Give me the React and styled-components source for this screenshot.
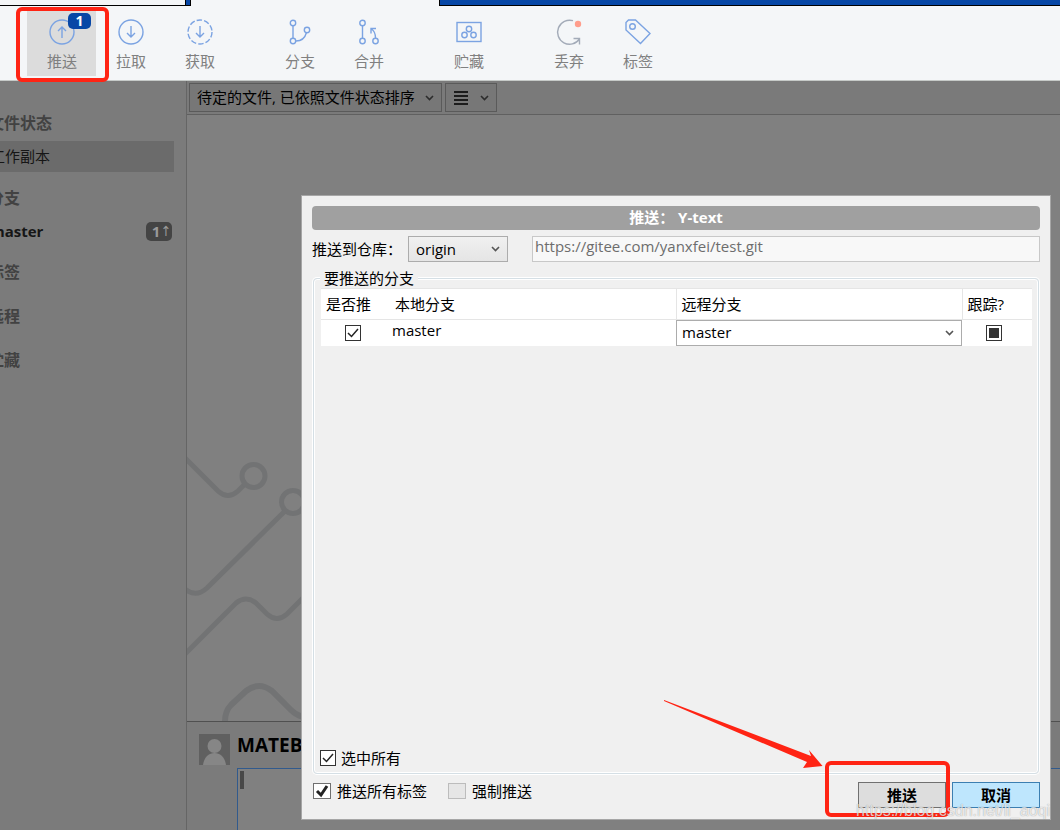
import { useEffect, useRef } from "react";
import styled, { createGlobalStyle } from "styled-components";

const GlobalStyle = createGlobalStyle`
	* {
		box-sizing: border-box;
	}

	body {
		margin: 0;
		background: #808080;
		font-family: "Open Sans", "Noto Sans CJK SC", sans-serif;
		font-size: 15px;
		line-height: 20px;
		color: #000;
	}

	button, input, select, textarea {
		font: inherit;
		color: inherit;
		margin: 0;
	}
`;

const PageElm = styled.div`
	position: relative;
	display: flex;
	flex-direction: column;
	min-height: 100vh;
	overflow: hidden;
`;

/* window tabs */

const TabStripElm = styled.div`
	display: flex;
	height: 6px;
	background: #0747a6;
	border-bottom: 1px solid #000;
`;

const TabElm = styled.div`
	width: ${(props) => props.$width};
	height: ${(props) => (props.$active ? "6px" : "5px")};
	background: #f4f6f8;
	border-right: 1px solid #000;
	margin-right: 4px;
	border-left: ${(props) => (props.$active ? "1px solid #000" : "0")};
`;

/* toolbar */

const ToolbarElm = styled.header`
	display: flex;
	gap: 31px;
	height: 75px;
	padding: 4px 27px;
	background: #f4f6f8;
	border-bottom: 1px solid #c6cac8;
`;

const ToolGroupElm = styled.div`
	display: flex;
	position: relative;
`;

const ToolButtonElm = styled.button`
	position: relative;
	display: flex;
	flex-direction: column;
	align-items: center;
	gap: 5px;
	width: 69px;
	height: 66px;
	padding: 8px 0 0 1px;
	border: 0;
	color: #808080;
	background: ${(props) => (props.$active ? "#dcdcdc" : "transparent")};

	svg {
		display: block;
		fill: none;
		stroke: #7ba3e2;
		stroke-width: 1.4;
	}
`;

const CountElm = styled.span`
	position: absolute;
	top: 3px;
	right: 5px;
	width: 23px;
	height: 16px;
	border-radius: 5px;
	background: #0747a6;
	color: #fff;
	font-size: 14px;
	font-weight: 700;
	line-height: 15px;
	text-align: center;
`;

/* body */

const BodyElm = styled.div`
	display: flex;
	flex-grow: 1;
`;

const SidebarElm = styled.nav`
	width: 187px;
	flex-shrink: 0;
	padding-top: 30px;
	background: #7b7b7b;
	border-right: 1px solid #656565;
	overflow: hidden;
`;

const SideTitleElm = styled.h2`
	margin: 0 0 ${(props) => props.$gap || "20px"} -12px;
	font-size: 16px;
	font-weight: 700;
	line-height: 24px;
	color: #424242;
`;

const SideRowElm = styled.a`
	display: flex;
	align-items: center;
	justify-content: space-between;
	height: ${(props) => (props.$selected ? "31px" : "22px")};
	margin: 0 ${(props) => (props.$selected ? "12px 14px" : "14px 18px")} 0;
	padding-bottom: ${(props) => (props.$selected ? "2px" : "0")};
	background: ${(props) => (props.$selected ? "#6b6b6b" : "transparent")};
	color: #161616;
	font-weight: ${(props) => (props.$selected ? 400 : 700)};
	text-decoration: none;

	span:first-child {
		margin-left: -10px;
	}
`;

const AheadElm = styled.span`
	display: flex;
	align-items: center;
	justify-content: flex-end;
	width: 26px;
	height: 19px;
	padding-right: 1px;
	border-radius: 5px;
	background: #444;
	color: #999;
	line-height: 19px;

	i {
		font-family: "DejaVu Sans Condensed", "DejaVu Sans", sans-serif;
		font-size: 14px;
		font-style: normal;
		font-weight: 400;
	}
`;

const MainElm = styled.main`
	display: flex;
	flex-direction: column;
	flex-grow: 1;
	min-width: 0;
`;

const FilterBarElm = styled.div`
	display: flex;
	gap: 3px;
	height: 34px;
	padding: 2px;
	background: #7a7a7a;
	border-bottom: 1px solid #606060;
`;

const SelectBoxElm = styled.span`
	position: relative;
	display: flex;
	align-items: center;
	width: ${(props) => props.$width || "100%"};

	> svg {
		position: absolute;
		right: 8px;
		pointer-events: none;
	}
`;

const ChevronElm = styled.svg`
	&& {
		fill: none;
		stroke: ${(props) => (props.$dim ? "#2c2c2c" : "#555")};
		stroke-width: 1.6;
	}
`;

const SelectElm = styled.select`
	appearance: none;
	width: 100%;
	height: 26px;
	padding: 0 7px;
	border: 1px solid #acacac;
	border-radius: 0;
	background: linear-gradient(#f0f0f0, #e5e5e5);
`;

const FilterSelectElm = styled(SelectElm)`
	height: 29px;
	padding-bottom: 1px;
	border-color: #5a5a5a;
	background: #777;
`;

const CellSelectElm = styled(SelectElm)`
	padding: 0 5px 2px;
	background: #fff;
`;

const ListButtonElm = styled.button`
	display: flex;
	align-items: center;
	justify-content: space-between;
	width: 52px;
	height: 29px;
	padding: 0 7px 0 8px;
	border: 1px solid #5a5a5a;
	background: #777;
`;

const LinesElm = styled.svg`
	stroke: #1c1c1c;
	stroke-width: 2;
`;

const CanvasElm = styled.div`
	display: flex;
	align-items: flex-end;
	flex-grow: 1;
	background: #808080;

	svg {
		display: block;
		fill: none;
		stroke: #727374;
		stroke-width: 5;
	}
`;

const CommitElm = styled.section`
	display: flex;
	gap: 7px;
	height: 109px;
	padding: 12px 0 0 12px;
	background: #7b7b7b;
	border-top: 1px solid #505050;
`;

const CommitFormElm = styled.div`
	position: relative;
	display: flex;
	flex-direction: column;
	flex-grow: 1;
	gap: 12px;
`;

const AuthorElm = styled.strong`
	font-size: 19px;
	line-height: 22px;
`;

const MessageElm = styled.textarea`
	flex-grow: 1;
	width: 100%;
	border: 1px solid #315a8d;
	border-width: 1px 0 0 1px;
	background: #808080;
	resize: none;
	outline: none;
`;

const CaretElm = styled.span`
	position: absolute;
	left: 3px;
	top: 37px;
	width: 4px;
	height: 18px;
	background: #484848;
`;

/* push dialog */

const DialogElm = styled.form`
	position: absolute;
	top: 195px;
	right: 9px;
	bottom: 10px;
	left: 301px;
	display: flex;
	flex-direction: column;
	padding: 10px 10px 11px;
	background: #f0f0f0;
	border: 1px solid #a6a6a6;
`;

const DialogTitleElm = styled.h1`
	margin: 0 0 6px;
	height: 24px;
	border-radius: 4px;
	background: #a0a0a0;
	color: #fff;
	font-size: 15px;
	line-height: 23px;
	text-align: center;
`;

const RepoRowElm = styled.div`
	display: flex;
	align-items: center;
	height: 26px;

	label {
		width: 96px;
		flex-shrink: 0;
	}
`;

const UrlElm = styled.input`
	flex-grow: 1;
	height: 26px;
	margin-left: 24px;
	padding: 0 2px 6px;
	border: 1px solid #c8c8c8;
	background: #f8f8f8;
	color: #6d6d6d;
`;

const GroupElm = styled.fieldset`
	display: flex;
	flex-direction: column;
	flex-grow: 1;
	min-width: 0;
	margin: 7px 1px 0;
	padding: 0 6px 5px;
	border: 1px solid #d5dfe5;
	border-radius: 4px;
	box-shadow: 0 0 0 1px #fff, inset 0 0 0 1px #fff;

	legend {
		padding: 0 4px;
		background: #f0f0f0;
		line-height: 18px;
	}
`;

const TableElm = styled.table`
	width: calc(100% - 1px);
	margin: 1px 0 0 1px;
	table-layout: fixed;
	border-collapse: collapse;
	background: #fff;

	th {
		height: 31px;
		padding: 0 5px;
		border-top: 1px solid #e5e5e5;
		border-bottom: 1px solid #e5e5e5;
		font-weight: 400;
		text-align: left;
		white-space: nowrap;
	}

	th:nth-child(n + 3) {
		border-left: 1px solid #e5e5e5;
	}

	td {
		height: 26px;
		padding: 0;
	}
`;

const CheckCellElm = styled.td`
	&& {
		padding-right: 6px;
	}
`;

const LocalNameElm = styled.td`
	&& {
		padding: 0 2px 6px;
		line-height: 18px;
	}
`;

const SpacerElm = styled.div`
	flex-grow: 1;
`;

const CheckLabelElm = styled.label`
	display: flex;
	align-items: center;
	gap: ${(props) => props.$gap || "5px"};
	justify-content: ${(props) => (props.$center ? "center" : "flex-start")};
	color: #000;
`;

const CheckBoxElm = styled.span`
	display: grid;
	place-items: center;

	> * {
		grid-area: 1 / 1;
	}

	svg {
		pointer-events: none;
		fill: none;
		stroke: #222;
		stroke-width: ${(props) => (props.$bold ? 3 : 1.5)};
	}
`;

const CheckInputElm = styled.input`
	appearance: none;
	width: ${(props) => (props.$wide ? "18px" : "16px")};
	height: 16px;
	border: 1px solid ${(props) => (props.disabled ? "#bcbcbc" : props.$wide ? "#707070" : "#333")};
	background: ${(props) => (props.disabled ? "#e6e6e6" : "#fff")};
`;

const MixedElm = styled.i`
	width: 10px;
	height: 10px;
	background: #333;
	pointer-events: none;
`;

const FooterElm = styled.footer`
	display: flex;
	align-items: center;
	gap: 6px;
	height: 26px;
	margin-top: 8px;
`;

const OptionsElm = styled.div`
	display: flex;
	flex-grow: 1;
	gap: 21px;
	padding: 0 0 9px 1px;
`;

const DialogButtonElm = styled.button`
	width: 88px;
	height: 26px;
	padding: 0;
	border: 1px solid ${(props) => (props.$focus ? "#3c7fb1" : "#707070")};
	background: ${(props) => (props.$focus ? "#bee6fd" : "#ddd")};
	font-weight: 700;
`;

/* marks over the window */

const FrameElm = styled.div`
	position: absolute;
	border: 4px solid #ff2414;
	border-radius: 6px;
	pointer-events: none;
`;

const PushFrameElm = styled(FrameElm)`
	top: -3px;
	left: -11px;
	width: 93px;
	height: 75px;
	z-index: 1;
`;

const ConfirmFrameElm = styled(FrameElm)`
	right: 100px;
	bottom: 2px;
	width: 125px;
	height: 56px;
`;

const ArrowElm = styled.svg`
	position: absolute;
	right: 227px;
	bottom: 50px;
	fill: #ff2414;
	pointer-events: none;
`;

const WatermarkElm = styled.span`
	position: absolute;
	right: 0;
	bottom: -1px;
	color: rgba(255, 255, 255, 0.75);
	font-family: "Liberation Sans", sans-serif;
	font-size: 16px;
	line-height: 18px;
	text-shadow: 0 0 1px rgba(0, 0, 0, 0.4);
	pointer-events: none;
`;

const Icon = ({ children }) => (
	<svg width="28" height="28" viewBox="0 0 28 28" aria-hidden="true">{children}</svg>
);

const icons = {
	push: <Icon><circle cx="14" cy="14" r="12" /><path d="M14 20V9M10 13l4-4 4 4" /></Icon>,
	pull: <Icon><circle cx="14" cy="14" r="12" /><path d="M14 8v11M10 15l4 4 4-4" /></Icon>,
	fetch: <Icon><circle cx="14" cy="14" r="12" strokeDasharray="5.5 2.04" /><path d="M14 8v11M10 15l4 4 4-4" /></Icon>,
	branch: (
		<Icon>
			<circle cx="7" cy="5" r="2.7" />
			<circle cx="7" cy="23" r="2.7" />
			<circle cx="21" cy="12" r="2.7" />
			<path d="M7 8v12M10 23c6 0 9-3 10.5-8.5" />
		</Icon>
	),
	merge: (
		<Icon>
			<circle cx="7.5" cy="5" r="2.7" />
			<circle cx="7.5" cy="23" r="2.7" />
			<circle cx="20.5" cy="23" r="2.7" />
			<path d="M7.5 8v12M20.5 20c0-5-1-7-4-9M21 10.5h-5v5" />
		</Icon>
	),
	stash: (
		<Icon>
			<rect x="2" y="4.5" width="24" height="19" />
			<circle cx="14" cy="11" r="2.7" />
			<circle cx="9.5" cy="17" r="2.7" />
			<circle cx="18.5" cy="17" r="2.7" />
		</Icon>
	),
	discard: (
		<Icon>
			<path stroke="#a3abb8" d="M18 2.7A12 12 0 1 0 24.5 21M18.5 20.5h6v6" />
			<circle cx="23" cy="6" r="3.2" fill="#ff9d8c" stroke="none" />
		</Icon>
	),
	tag: (
		<Icon>
			<path d="M2 4.5L4.5 2h7L26 15.5 16.5 25.5 2 12z" />
			<circle cx="8.5" cy="8.5" r="2.8" />
		</Icon>
	),
};

const toolGroups = [
	[["push", "推送"], ["pull", "拉取"], ["fetch", "获取"]],
	[["branch", "分支"], ["merge", "合并"]],
	[["stash", "贮藏"]],
	[["discard", "丢弃"], ["tag", "标签"]],
];

const Chevron = ({ dim }) => (
	<ChevronElm $dim={dim} width="9" height="8" viewBox="0 0 9 8" aria-hidden="true"><path d="M1 2l3.5 3.5L8 2" /></ChevronElm>
);

const Check = ({ label, ariaLabel, mixed, bold, disabled, checked, gap, center }) => {
	const input = useRef(null);

	useEffect(() => {
		input.current.indeterminate = !!mixed;
	}, [mixed]);

	return (
		<CheckLabelElm $gap={gap} $center={center}>
			<CheckBoxElm $bold={bold}>
				<CheckInputElm
					ref={input}
					type="checkbox"
					aria-label={ariaLabel}
					defaultChecked={checked}
					disabled={disabled}
					$wide={bold || disabled}
				/>
				{checked && <svg width="14" height="14" viewBox="0 0 14 14"><path d={bold ? "M2 7l4 4 6-9" : "M2 7l3.5 3.5L12 3"} /></svg>}
				{mixed && <MixedElm />}
			</CheckBoxElm>
			{label}
		</CheckLabelElm>
	);
};

const Toolbar = () => (
	<ToolbarElm>
		{toolGroups.map((group, i) => (
			<ToolGroupElm key={i}>
				{group.map(([id, label]) => (
					<ToolButtonElm key={id} type="button" $active={id === "push"}>
						{icons[id]}
						{label}
						{id === "push" && <CountElm>1</CountElm>}
					</ToolButtonElm>
				))}
				{i === 0 && <PushFrameElm />}
			</ToolGroupElm>
		))}
	</ToolbarElm>
);

const Sidebar = () => (
	<SidebarElm>
		<SideTitleElm $gap="6px">文件状态</SideTitleElm>
		<SideRowElm href="#copy" $selected><span>工作副本</span></SideRowElm>
		<SideTitleElm $gap="10px">分支</SideTitleElm>
		<SideRowElm href="#master">
			<span>master</span>
			<AheadElm>1<i>↑</i></AheadElm>
		</SideRowElm>
		<SideTitleElm>标签</SideTitleElm>
		<SideTitleElm>远程</SideTitleElm>
		<SideTitleElm>贮藏</SideTitleElm>
	</SidebarElm>
);

const Circuit = () => (
	<svg width="115" height="270" viewBox="187 451 115 270" aria-hidden="true">
		<path d="M185 458L218 491Q228 500 238 491L245 484" />
		<circle cx="253.5" cy="476" r="11.5" />
		<circle cx="293" cy="502" r="11.5" />
		<path d="M285 511L207 588Q196 598 185 589" />
		<path d="M185 654L236 603Q246 595 256 603L267 614Q277 623 287 614L303 598" />
		<path strokeWidth="6" d="M225 722Q225 711 231 705L246 691Q259 681 272 691L291 710Q296 715 303 717" />
	</svg>
);

const Commit = () => (
	<CommitElm>
		<svg width="31" height="31" viewBox="0 0 31 31" aria-hidden="true">
			<path fill="#606060" d="M0 0h31v31H0z" />
			<circle cx="15.5" cy="12" r="7" fill="#868686" />
			<path fill="#868686" d="M4 31c1-8 6-12 11.5-12S26 23 27 31z" />
		</svg>
		<CommitFormElm>
			<AuthorElm>MATEB</AuthorElm>
			<MessageElm aria-label="提交信息" />
			<CaretElm />
		</CommitFormElm>
	</CommitElm>
);

const PushDialog = () => (
	<DialogElm onSubmit={(e) => e.preventDefault()}>
		<DialogTitleElm>推送： Y-text</DialogTitleElm>
		<RepoRowElm>
			<label htmlFor="remote">推送到仓库：</label>
			<SelectBoxElm $width="100px">
				<SelectElm id="remote"><option>origin</option></SelectElm>
				<Chevron />
			</SelectBoxElm>
			<UrlElm aria-label="URL" readOnly value="https://gitee.com/yanxfei/test.git" />
		</RepoRowElm>
		<GroupElm>
			<legend>要推送的分支</legend>
			<TableElm>
				<colgroup>
					<col style={{ width: 69 }} />
					<col />
					<col style={{ width: 286 }} />
					<col style={{ width: 70 }} />
				</colgroup>
				<thead>
					<tr><th>是否推</th><th>本地分支</th><th>远程分支</th><th>跟踪?</th></tr>
				</thead>
				<tbody>
					<tr>
						<CheckCellElm><Check ariaLabel="是否推" checked center /></CheckCellElm>
						<LocalNameElm>master</LocalNameElm>
						<td>
							<SelectBoxElm>
								<CellSelectElm aria-label="远程分支"><option>master</option></CellSelectElm>
								<Chevron />
							</SelectBoxElm>
						</td>
						<CheckCellElm><Check ariaLabel="跟踪" mixed center /></CheckCellElm>
					</tr>
				</tbody>
			</TableElm>
			<SpacerElm />
			<Check label="选中所有" checked />
		</GroupElm>
		<FooterElm>
			<OptionsElm>
				<Check label="推送所有标签" checked bold gap="6px" />
				<Check label="强制推送" disabled gap="6px" />
			</OptionsElm>
			<DialogButtonElm type="submit">推送</DialogButtonElm>
			<DialogButtonElm type="button" $focus>取消</DialogButtonElm>
		</FooterElm>
		<ConfirmFrameElm />
		<ArrowElm width="160" height="70" viewBox="663 699 160 70" aria-hidden="true">
			<path d="M664 700L811 756 809 750 822.5 766 803 768 807 762 664 701z" />
		</ArrowElm>
		<WatermarkElm>https://blog.csdn.net/li_aoqi</WatermarkElm>
	</DialogElm>
);

export default function App() {
	return (
		<PageElm>
			<GlobalStyle />
			<TabStripElm>
				<TabElm $width="186px" />
				<TabElm $width="250px" $active />
			</TabStripElm>
			<Toolbar />
			<BodyElm>
				<Sidebar />
				<MainElm>
					<FilterBarElm>
						<SelectBoxElm $width="253px">
							<FilterSelectElm aria-label="文件排序"><option>待定的文件, 已依照文件状态排序</option></FilterSelectElm>
							<Chevron dim />
						</SelectBoxElm>
						<ListButtonElm type="button" aria-label="视图">
							<LinesElm width="14" height="14" viewBox="0 0 14 14"><path d="M0 1h14M0 5h14M0 9h14M0 13h14" /></LinesElm>
							<Chevron dim />
						</ListButtonElm>
					</FilterBarElm>
					<CanvasElm><Circuit /></CanvasElm>
					<Commit />
				</MainElm>
			</BodyElm>
			<PushDialog />
		</PageElm>
	);
}
